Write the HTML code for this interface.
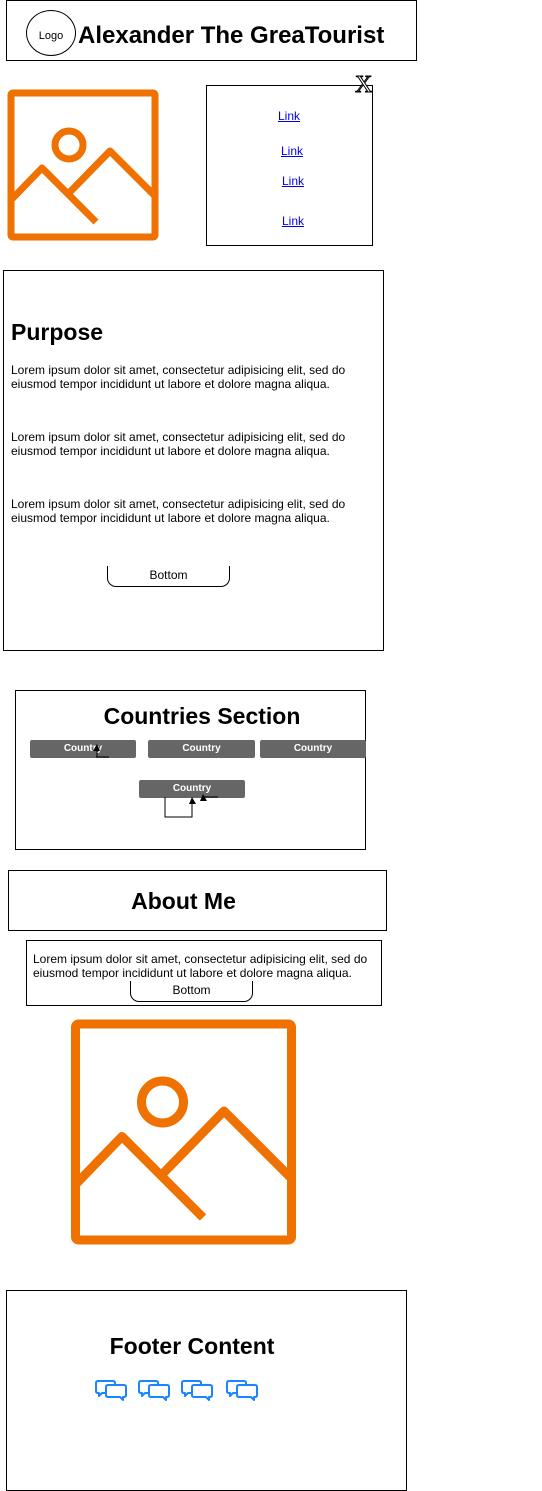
<!DOCTYPE html>
<html><head><style>
body{margin:0;width:542px;height:1491px;position:relative;background:#fff;font-family:"Liberation Sans",Arial,sans-serif;overflow:hidden}
.a{position:absolute;box-sizing:border-box}
.b{border:1px solid #000}
.lorem{font-size:12px;line-height:14px}
a{color:#00e;text-decoration:underline;font-size:12px}
.btn{position:absolute;background:#666;color:#fff;font-size:10px;font-weight:bold;text-align:center;line-height:18px;height:18px;border-radius:2px}
.pill{position:absolute;border:1px solid #000;border-top:none;border-radius:0 0 9px 9px;font-size:12px;text-align:center;line-height:19px;height:20px}
</style></head><body>
<div class="a b" style="left:6px;top:0;width:411px;height:61px"></div>
<div class="a" style="left:26px;top:10px;width:50px;height:46px;border:1px solid #000;border-radius:50%;font-size:11px;text-align:center;line-height:50px">Logo</div>
<div class="a" style="left:78px;top:22px;font-size:24px;font-weight:bold">Alexander The GreaTourist</div>

<svg class="a" style="left:0;top:85px" width="170" height="160" viewBox="0 85 170 160"><g fill="none" stroke="#ef7100" stroke-width="7" stroke-linejoin="round"><rect x="11" y="93" width="144" height="144" rx="2"/><circle cx="69" cy="145" r="14"/><path d="M11 200 L42 168 L96 222 M68 194 L110 151 L155 196"/></g></svg>

<div class="a b" style="left:206px;top:85px;width:167px;height:161px"></div>
<div class="a" style="left:355px;top:72px;font-size:24px;color:#fff;-webkit-text-stroke:1px #000;font-family:'Liberation Serif',serif">X</div>
<a class="a" style="left:278px;top:109px">Link</a>
<a class="a" style="left:281px;top:144px">Link</a>
<a class="a" style="left:282px;top:174px">Link</a>
<a class="a" style="left:282px;top:214px">Link</a>

<div class="a b" style="left:3px;top:270px;width:381px;height:381px"></div>
<div class="a" style="left:11px;top:319px;font-size:23px;font-weight:bold">Purpose</div>
<div class="a lorem" style="left:11px;top:363px;width:360px">Lorem ipsum dolor sit amet, consectetur adipisicing elit, sed do eiusmod tempor incididunt ut labore et dolore magna aliqua.</div>
<div class="a lorem" style="left:11px;top:430px;width:360px">Lorem ipsum dolor sit amet, consectetur adipisicing elit, sed do eiusmod tempor incididunt ut labore et dolore magna aliqua.</div>
<div class="a lorem" style="left:11px;top:497px;width:360px">Lorem ipsum dolor sit amet, consectetur adipisicing elit, sed do eiusmod tempor incididunt ut labore et dolore magna aliqua.</div>
<div class="pill" style="left:107px;top:566px;width:121px">Bottom</div>

<div class="a b" style="left:15px;top:690px;width:351px;height:160px"></div>
<div class="a" style="left:15px;top:703px;width:374px;text-align:center;font-size:23px;font-weight:bold">Countries Section</div>
<div class="btn" style="left:30px;top:740px;width:106px">Country</div>
<div class="btn" style="left:148px;top:740px;width:107px">Country</div>
<div class="btn" style="left:260px;top:740px;width:106px">Country</div>
<div class="btn" style="left:139px;top:780px;width:106px">Country</div>
<svg class="a" style="left:0;top:0" width="542" height="860"><g fill="none" stroke="#000" stroke-width="1"><path d="M96 757 H109 M97 757 V748 M165 797 V817 H192 V800 M202 797 H218"/></g><g fill="#000"><path d="M93 751 L97 744 L100 751Z M189 804 L192 797 L196 804Z M200 801 L203 794 L207 801Z"/></g></svg>

<div class="a b" style="left:8px;top:870px;width:379px;height:61px"></div>
<div class="a" style="left:8px;top:888px;width:351px;text-align:center;font-size:23px;font-weight:bold">About Me</div>
<div class="a b" style="left:26px;top:940px;width:356px;height:66px"></div>
<div class="a lorem" style="left:33px;top:952px;width:348px">Lorem ipsum dolor sit amet, consectetur adipisicing elit, sed do eiusmod tempor incididunt ut labore et dolore magna aliqua.</div>
<div class="pill" style="left:130px;top:981px;width:121px">Bottom</div>

<svg class="a" style="left:65px;top:1015px" width="240" height="240" viewBox="4 87 160 160"><g fill="none" stroke="#ef7100" stroke-width="6" stroke-linejoin="round"><rect x="11" y="93" width="144" height="144" rx="2"/><circle cx="69" cy="145" r="14"/><path d="M11 200 L42 168 L96 222 M68 194 L110 151 L155 196"/></g></svg>

<div class="a b" style="left:6px;top:1290px;width:401px;height:201px"></div>
<div class="a" style="left:6px;top:1333px;width:372px;text-align:center;font-size:23px;font-weight:bold">Footer Content</div>
<svg width="0" height="0" style="position:absolute"><defs><g id="c" fill="#fff" stroke="#1a85ff" stroke-width="2" stroke-linejoin="round"><path d="M3 1 H18 Q20 1 20 3 V11 Q20 13 18 13 H7 L4 16 V13 H3 Q1 13 1 11 V3 Q1 1 3 1Z"/><path d="M13 5 H29 Q31 5 31 7 V15 Q31 17 29 17 H28 V20 L25 17 H13 Q11 17 11 15 V7 Q11 5 13 5Z"/></g></defs></svg>
<svg class="a" style="left:95px;top:1380px" width="33" height="22"><use href="#c"/></svg>
<svg class="a" style="left:138px;top:1380px" width="33" height="22"><use href="#c"/></svg>
<svg class="a" style="left:181px;top:1380px" width="33" height="22"><use href="#c"/></svg>
<svg class="a" style="left:226px;top:1380px" width="33" height="22"><use href="#c"/></svg>
</body></html>
